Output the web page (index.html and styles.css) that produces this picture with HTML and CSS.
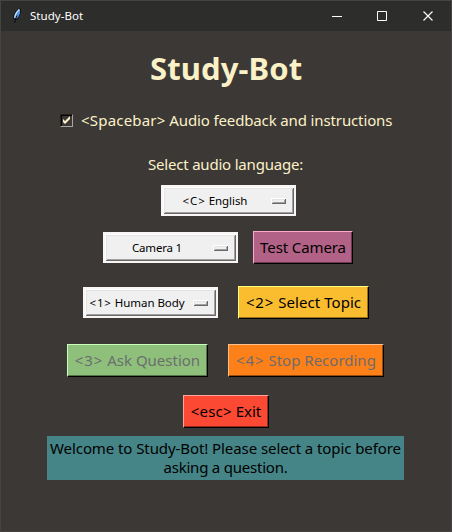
FILE: index.html
```html
<!DOCTYPE html>
<html lang="en">
<head>
<meta charset="utf-8">
<title>Study-Bot</title>
<link rel="stylesheet" href="styles.css">
</head>
<body>
<div class="window">
  <header class="titlebar">
    <svg class="feather" width="10" height="16" viewBox="0 0 10 16">
      <path d="M8 .5 9 1 8.5 6 6.5 10 4 12 1.5 11 1.5 7 4 3Z" fill="#0b0d12"/>
      <path d="M8 1 8 5.5 6 9.5 3.5 11 2.2 10 2.7 6.5 5 3Z" fill="#4f93e0"/>
      <path d="M7.3 1.5 4.5 4.5 3.2 7.5 2.8 10" fill="none" stroke="#cde6fc" stroke-width="1.2"/>
      <path d="M5 7.5 3.5 11 2.8 15" fill="none" stroke="#080a0e"/>
    </svg>
    <span class="caption">Study-Bot</span>
    <svg class="controls" width="104" height="10" viewBox="0 0 104 10" fill="none" stroke="#fff">
      <path d="M0 5.5H10M45.5.5h9v9h-9z"/>
      <path d="M91.5.5l9 9M100.5.5l-9 9" stroke-width="1.1"/>
    </svg>
  </header>
  <main class="content">
    <h1 class="heading">Study-Bot</h1>
    <label class="check-row">
      <span class="checkbox"><svg width="9" height="9" viewBox="0 0 9 9"><path d="M1 3 3 5 8 0V3L3 8 1 6Z" fill="#fbf1c7"/></svg></span>
      <span class="check-text"><span class="key-wide">&lt;Spacebar&gt;</span> Audio feedback and instructions</span>
    </label>
    <p class="prompt">Select audio language:</p>
    <div class="row row-language">
      <div class="menu"><span class="menu-text"><span class="key">&lt;C&gt;</span> English</span><i class="handle"></i></div>
    </div>
    <div class="row row-camera">
      <div class="menu"><span class="menu-text tight">Camera 1</span><i class="handle"></i></div>
      <div class="button pink">Test Camera</div>
    </div>
    <div class="row row-topic">
      <div class="menu"><span class="menu-text"><span class="key">&lt;1&gt;</span> Human Body</span><i class="handle"></i></div>
      <div class="button yellow"><span class="key">&lt;2&gt;</span> Select Topic</div>
    </div>
    <div class="row row-actions">
      <div class="button green disabled"><span class="key">&lt;3&gt;</span> Ask Question</div>
      <div class="button orange disabled"><span class="key">&lt;4&gt;</span> Stop Recording</div>
    </div>
    <div class="row row-exit">
      <div class="button red"><span class="key-wide">&lt;esc&gt;</span> Exit</div>
    </div>
    <p class="message">Welcome to Study-Bot! Please select a topic before<br><span class="second">asking a question.</span></p>
  </main>
</div>
</body>
</html>
```
FILE: styles.css
```css
* { box-sizing: border-box; }
body {
  margin: 0;
  font-family: "Noto Sans", "Open Sans", sans-serif;
  font-size: 15px;
  white-space: nowrap;
  overflow: hidden;
}
.window {
  width: 452px;
  height: 532px;
  border: 1px solid #454442;
  background: #3c3836;
  color: #fbf1c7;
}
.titlebar {
  display: flex;
  align-items: center;
  height: 30px;
  padding-left: 11px;
  background: #2d2d2b;
  color: #fff;
}
.caption {
  margin-left: 8px;
  font-size: 11.5px;
  letter-spacing: 0.05px;
  line-height: 30px;
}
.controls { margin: 0 15px 0 auto; }
.content { display: flex; flex-direction: column; }
.heading {
  margin: 17px 0 0 149px;
  font-size: 31px;
  line-height: 40px;
  letter-spacing: 0.1px;
}
.check-row {
  display: flex;
  align-items: center;
  height: 20px;
  margin: 22px 0 0 59px;
}
.checkbox {
  width: 13px;
  height: 13px;
  padding: 1px;
  border: 1px solid;
  border-color: #24211f #aaa6a2 #aaa6a2 #24211f;
  box-shadow: inset 1px 1px #000;
  line-height: 0;
}
.check-text { margin-left: 8px; line-height: 20px; letter-spacing: -0.13px; }
.key { letter-spacing: 0.9px; }
.key-wide { letter-spacing: 0.2px; }
.prompt {
  margin: 24px 0 0 147px;
  line-height: 20px;
  letter-spacing: -0.2px;
}
.row { display: flex; align-items: center; }
.row-language { margin: 11px 0 0 160px; }
.row-camera { gap: 15px; margin: 15px 0 0 102px; }
.row-topic { gap: 20px; margin: 22px 0 0 82px; }
.row-actions { gap: 20px; margin: 25px 0 0 66px; }
.row-exit { margin: 18px 0 0 182px; }
.menu {
  display: flex;
  align-items: center;
  width: 135px;
  height: 31px;
  padding: 0 8px 0 3px;
  border: 2px solid #f8f5f4;
  background: #f0f0f0;
  box-shadow: inset 1px 1px #fff, inset -1px -1px #696969, inset 2px 2px #e3e3e3, inset -2px -2px #a0a0a0;
  color: #000;
  font-size: 11.5px;
}
.menu-text { flex: 1; padding-right: 7px; text-align: center; letter-spacing: -0.05px; }
.menu-text.tight { letter-spacing: -0.2px; }
.handle {
  width: 15px;
  height: 6px;
  box-shadow: inset 1px 1px #fff, inset -1px -1px #696969, inset 2px 2px #e3e3e3, inset -2px -2px #a0a0a0;
}
.button {
  height: 33px;
  border: 1px solid;
  border-right-color: #000;
  border-bottom-color: #000;
  color: #000;
  line-height: 31px;
  text-align: center;
}
.pink {
  width: 100px;
  background: #b16286;
  border-top-color: #ffa9cc;
  border-left-color: #ffa9cc;
  box-shadow: inset -1px -1px #6a3b50;
  letter-spacing: -0.1px;
}
.yellow {
  width: 131px;
  background: #fabd2f;
  border-top-color: #ffff82;
  border-left-color: #ffff82;
  box-shadow: inset -1px -1px #96711c;
  letter-spacing: 0.05px;
}
.green {
  width: 141px;
  background: #8ec07c;
  border-top-color: #c7ffba;
  border-left-color: #c7ffba;
  box-shadow: inset -1px -1px #55734a;
  letter-spacing: 0;
}
.orange {
  width: 156px;
  background: #fe8019;
  border-top-color: #ffbf8c;
  border-left-color: #ffbf8c;
  box-shadow: inset -1px -1px #984d0f;
  letter-spacing: 0;
}
.red {
  width: 86px;
  background: #fb4934;
  border-top-color: #ffa499;
  border-left-color: #ffa499;
  box-shadow: inset -1px -1px #972c1f;
}
.disabled { color: #6d6d6d; }
.message {
  width: 357px;
  height: 44px;
  margin: 8px 0 0 46px;
  padding-top: 3px;
  background: #458588;
  color: #000;
  line-height: 19px;
  text-align: center;
  letter-spacing: -0.08px;
}
.second { letter-spacing: -0.22px; }
```
